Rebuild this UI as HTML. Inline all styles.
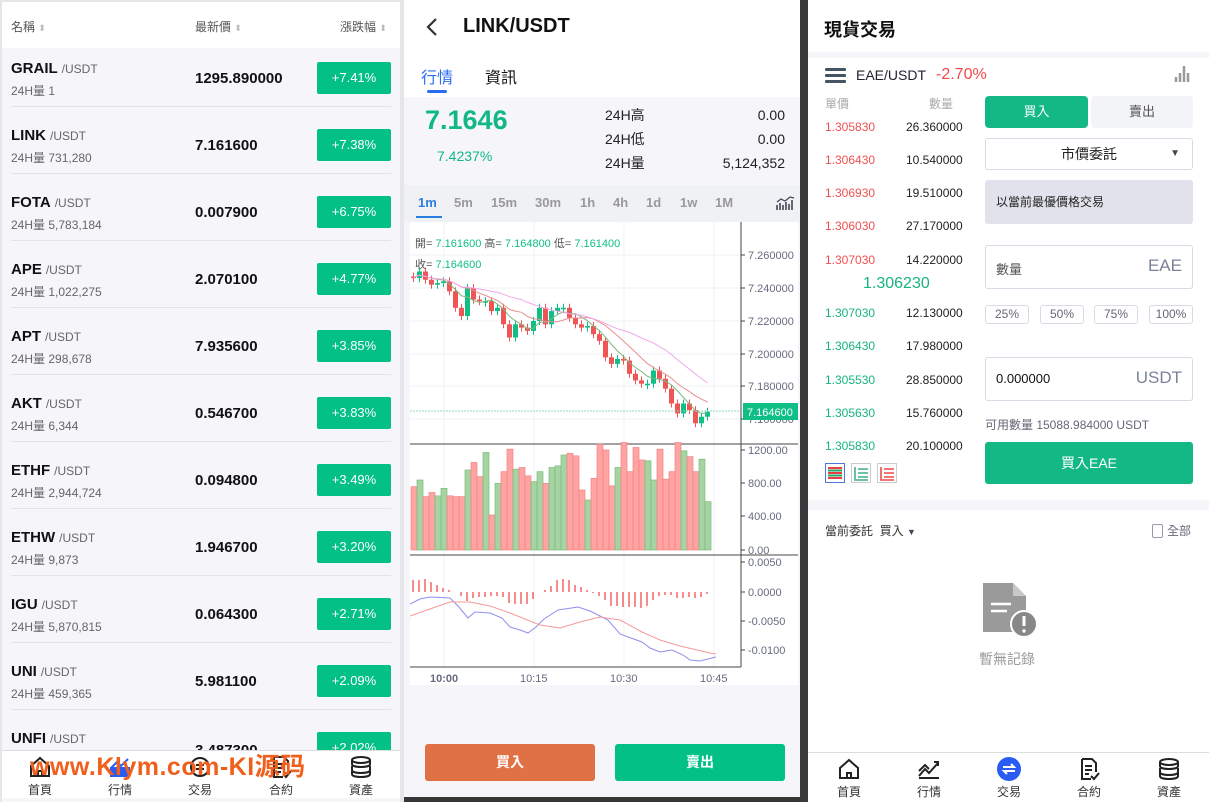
<!DOCTYPE html>
<html><head><meta charset="utf-8">
<style>
*{margin:0;padding:0;box-sizing:border-box}
body{width:1209px;height:802px;overflow:hidden;background:#e6e6ea;font-family:"Liberation Sans","Noto Sans CJK TC",sans-serif;position:relative;color:#111}
.a{position:absolute;white-space:nowrap}
#L{left:2px;top:2px;width:398px;height:800px;background:#f5f5fa;overflow:hidden}
#M{left:404px;top:0;width:396px;height:797px;background:#f5f5fa;overflow:hidden}
#R{left:808px;top:0;width:401px;height:802px;background:#fff;overflow:hidden}
.row{position:absolute;left:0;width:398px;height:67px}
.row .nm{position:absolute;left:9px;top:10px;font-size:15px;font-weight:bold;color:#111}
.row .nm span{font-weight:normal;font-size:12px;color:#666;margin-left:4px}
.row .vol{position:absolute;left:9px;top:32px;font-size:12px;color:#666}
.row .pr{position:absolute;left:193px;top:20px;font-size:15px;font-weight:bold}
.row .bt{position:absolute;left:315px;top:12px;width:74px;height:32px;background:#03c087;border-radius:2px;color:#fff;font-size:13px;text-align:center;line-height:32px}
.row .ln{position:absolute;left:9px;right:9px;bottom:10px;height:1px;background:#e2e2e8}
.nav{position:absolute;left:0;width:100%;height:48px;background:#fff}
.nav div{position:absolute;top:4px;width:60px;margin-left:-30px;text-align:center;font-size:12px;color:#333}
.nav svg{display:block;margin:0 auto 2px}
.ob{position:absolute;left:17px;font-size:12px}
.ob b{font-weight:normal;position:absolute;left:0}
.ob i{font-style:normal;position:absolute;left:81px;color:#222}
.box{position:absolute;border:1px solid #d8dbe6;border-radius:3px;background:#fff}
.pct{position:absolute;top:305px;width:44px;height:19px;border:1px solid #d8dbe6;border-radius:3px;font-size:12px;color:#667;text-align:center;line-height:17px}
</style></head><body>

<!-- LEFT -->
<div id="L" class="a">
  <div class="a" style="left:0;top:0;width:398px;height:46px;background:#fff"></div>
  <div class="a" style="left:9px;top:16px;font-size:12px;color:#555">名稱 <span style="color:#bbb;font-size:9px">⬍</span></div>
  <div class="a" style="left:193px;top:16px;font-size:12px;color:#555">最新價 <span style="color:#bbb;font-size:9px">⬍</span></div>
  <div class="a" style="left:338px;top:16px;font-size:12px;color:#555">漲跌幅 <span style="color:#bbb;font-size:9px">⬍</span></div>
  <div class="row" style="top:48px"><div class="nm">GRAIL<span>/USDT</span></div><div class="vol">24H量 1</div><div class="pr">1295.890000</div><div class="bt">+7.41%</div><div class="ln"></div></div>
  <div class="row" style="top:115px"><div class="nm">LINK<span>/USDT</span></div><div class="vol">24H量 731,280</div><div class="pr">7.161600</div><div class="bt">+7.38%</div><div class="ln"></div></div>
  <div class="row" style="top:182px"><div class="nm">FOTA<span>/USDT</span></div><div class="vol">24H量 5,783,184</div><div class="pr">0.007900</div><div class="bt">+6.75%</div><div class="ln"></div></div>
  <div class="row" style="top:249px"><div class="nm">APE<span>/USDT</span></div><div class="vol">24H量 1,022,275</div><div class="pr">2.070100</div><div class="bt">+4.77%</div><div class="ln"></div></div>
  <div class="row" style="top:316px"><div class="nm">APT<span>/USDT</span></div><div class="vol">24H量 298,678</div><div class="pr">7.935600</div><div class="bt">+3.85%</div><div class="ln"></div></div>
  <div class="row" style="top:383px"><div class="nm">AKT<span>/USDT</span></div><div class="vol">24H量 6,344</div><div class="pr">0.546700</div><div class="bt">+3.83%</div><div class="ln"></div></div>
  <div class="row" style="top:450px"><div class="nm">ETHF<span>/USDT</span></div><div class="vol">24H量 2,944,724</div><div class="pr">0.094800</div><div class="bt">+3.49%</div><div class="ln"></div></div>
  <div class="row" style="top:517px"><div class="nm">ETHW<span>/USDT</span></div><div class="vol">24H量 9,873</div><div class="pr">1.946700</div><div class="bt">+3.20%</div><div class="ln"></div></div>
  <div class="row" style="top:584px"><div class="nm">IGU<span>/USDT</span></div><div class="vol">24H量 5,870,815</div><div class="pr">0.064300</div><div class="bt">+2.71%</div><div class="ln"></div></div>
  <div class="row" style="top:651px"><div class="nm">UNI<span>/USDT</span></div><div class="vol">24H量 459,365</div><div class="pr">5.981100</div><div class="bt">+2.09%</div><div class="ln"></div></div>
  <div class="row" style="top:718px"><div class="nm">UNFI<span>/USDT</span></div><div class="pr" style="top:22px">3.487300</div><div class="bt">+2.02%</div></div>
  <div class="nav" style="top:748px;border-top:1px solid #ddd">
    <div style="left:38px"><svg width="24" height="24" viewBox="0 0 24 24" fill="none" stroke="#222" stroke-width="2"><path d="M3 11L12 3l9 8v10H3z M10 21v-5h4v5"/></svg>首頁</div>
    <div style="left:118px"><svg width="24" height="24" viewBox="0 0 24 24"><rect x="2" y="12" width="20" height="10" fill="#2a5cf5"/><path d="M3 13l6-6 4 4 7-7" stroke="#2a5cf5" stroke-width="2" fill="none"/></svg>行情</div>
    <div style="left:198px"><svg width="24" height="24" viewBox="0 0 24 24" fill="none" stroke="#222" stroke-width="2"><circle cx="12" cy="12" r="9"/><path d="M8 10h8M8 14h8"/></svg>交易</div>
    <div style="left:279px"><svg width="24" height="24" viewBox="0 0 24 24" fill="none" stroke="#222" stroke-width="2"><path d="M5 2h10l4 4v9M5 2v20h9M8 9h7M8 13h7M8 17h4M14 19l3 3 5-6"/></svg>合約</div>
    <div style="left:359px"><svg width="24" height="24" viewBox="0 0 24 24" fill="none" stroke="#222" stroke-width="2"><ellipse cx="12" cy="5" rx="9" ry="3"/><path d="M3 5v4c0 2 4 3 9 3s9-1 9-3V5M3 11v4c0 2 4 3 9 3s9-1 9-3v-4M3 16v3c0 2 4 3 9 3s9-1 9-3v-3"/></svg>資產</div>
  </div>
  <div class="a" style="left:28px;top:745px;font-size:25px;font-weight:bold;color:#f0601c;letter-spacing:0.5px">www.Klym.com-KI源码</div>
</div>

<!-- MIDDLE -->
<div id="M" class="a">
  <div class="a" style="left:0;top:0;width:396px;height:97px;background:#fff"></div>
  <svg class="a" style="left:20px;top:16px" width="16" height="22" viewBox="0 0 16 22"><path d="M12 3L4 11l8 8" stroke="#333" stroke-width="2.2" fill="none"/></svg>
  <div class="a" style="left:59px;top:15px;font-size:20px;font-weight:bold;color:#111">LINK/USDT</div>
  <div class="a" style="left:17px;top:64px;font-size:16px;color:#2a6df4">行情</div>
  <div class="a" style="left:81px;top:64px;font-size:16px;color:#111">資訊</div>
  <div class="a" style="left:23px;top:90px;width:20px;height:3px;background:#2a6df4;border-radius:2px"></div>
  <div class="a" style="left:21px;top:105px;font-size:27px;font-weight:bold;color:#11b886">7.1646</div>
  <div class="a" style="left:33px;top:148px;font-size:14px;color:#11b886">7.4237%</div>
  <div class="a" style="left:201px;top:103px;font-size:14px;color:#222;line-height:24px">24H高<br>24H低<br>24H量</div>
  <div class="a" style="right:15px;top:103px;font-size:14px;color:#222;line-height:24px;text-align:right">0.00<br>0.00<br>5,124,352</div>
  <div class="a" style="left:0;top:185px;width:396px;height:37px;background:#eff1f5"></div>
  <div class="a" style="left:14px;top:195px;font-size:13px;font-weight:bold;color:#2a7ee0">1m</div>
  <div class="a" style="left:12px;top:216px;width:26px;height:2px;background:#2a7ee0"></div>
  <div class="a" style="left:50px;top:195px;font-size:13px;font-weight:bold;color:#999">5m</div>
  <div class="a" style="left:87px;top:195px;font-size:13px;font-weight:bold;color:#999">15m</div>
  <div class="a" style="left:131px;top:195px;font-size:13px;font-weight:bold;color:#999">30m</div>
  <div class="a" style="left:176px;top:195px;font-size:13px;font-weight:bold;color:#999">1h</div>
  <div class="a" style="left:209px;top:195px;font-size:13px;font-weight:bold;color:#999">4h</div>
  <div class="a" style="left:242px;top:195px;font-size:13px;font-weight:bold;color:#999">1d</div>
  <div class="a" style="left:276px;top:195px;font-size:13px;font-weight:bold;color:#999">1w</div>
  <div class="a" style="left:311px;top:195px;font-size:13px;font-weight:bold;color:#999">1M</div>
  <svg class="a" style="left:372px;top:196px" width="19" height="15" viewBox="0 0 19 15"><path d="M1 14V9M4 14V7M7 14V9M10 14V6M13 14V8M16 14V4" stroke="#445" stroke-width="1.6"/><path d="M1 6l4-3 4 2 5-4 4 1" stroke="#445" stroke-width="1.2" fill="none"/></svg>
  <svg id="ch" class="a" style="left:6px;top:222px" width="388" height="463" viewBox="0 0 388 463"></svg>
  <div class="a" style="left:21px;top:744px;width:170px;height:37px;background:#e07145;border-radius:3px;color:#fff;font-size:14px;font-weight:bold;text-align:center;line-height:37px">買入</div>
  <div class="a" style="left:211px;top:744px;width:170px;height:37px;background:#03c087;border-radius:3px;color:#fff;font-size:14px;font-weight:bold;text-align:center;line-height:37px">賣出</div>
</div>
<div class="a" style="left:404px;top:797px;width:404px;height:5px;background:#363636"></div>
<div class="a" style="left:800px;top:0;width:8px;height:802px;background:#3a3a3a"></div>

<!-- RIGHT -->
<div id="R" class="a">
  <div class="a" style="left:16px;top:16px;font-size:18px;font-weight:bold;color:#111">現貨交易</div>
  <div class="a" style="left:0;top:52px;width:401px;height:6px;background:#f5f5fa"></div>
  <div class="a" style="left:17px;top:68px;width:21px;height:3px;background:#445566;box-shadow:0 6px 0 #445566,0 12px 0 #445566;border-radius:1px"></div>
  <div class="a" style="left:48px;top:67px;font-size:14px;color:#223">EAE/USDT</div>
  <div class="a" style="left:128px;top:66px;font-size:16px;color:#f04a4a">-2.70%</div>
  <svg class="a" style="left:366px;top:65px" width="17" height="17"><path d="M2 17v-5M6 17V8M10 17V1M14 17V8" stroke="#999" stroke-width="2.5"/></svg>
  <div class="a" style="left:17px;top:95px;font-size:12px;color:#aaa">單價</div>
  <div class="a" style="left:121px;top:95px;font-size:12px;color:#aaa">數量</div>
  <div class="ob" style="top:120px"><b style="color:#f05050">1.305830</b><i>26.360000</i></div>
  <div class="ob" style="top:153px"><b style="color:#f05050">1.306430</b><i>10.540000</i></div>
  <div class="ob" style="top:186px"><b style="color:#f05050">1.306930</b><i>19.510000</i></div>
  <div class="ob" style="top:219px"><b style="color:#f05050">1.306030</b><i>27.170000</i></div>
  <div class="ob" style="top:253px"><b style="color:#f05050">1.307030</b><i>14.220000</i></div>
  <div class="a" style="left:55px;top:275px;font-size:16px;color:#18b483">1.306230</div>
  <div class="ob" style="top:306px"><b style="color:#18b483">1.307030</b><i>12.130000</i></div>
  <div class="ob" style="top:339px"><b style="color:#18b483">1.306430</b><i>17.980000</i></div>
  <div class="ob" style="top:373px"><b style="color:#18b483">1.305530</b><i>28.850000</i></div>
  <div class="ob" style="top:406px"><b style="color:#18b483">1.305630</b><i>15.760000</i></div>
  <div class="ob" style="top:439px"><b style="color:#18b483">1.305830</b><i>20.100000</i></div>
  <svg class="a" style="left:17px;top:463px" width="74" height="22">
    <rect x="0.5" y="0.5" width="19" height="19" fill="#fff" stroke="#4a78d8"/><path d="M3 5h14M3 10h14M3 15h14" stroke="#e84040" stroke-width="2"/><path d="M3 7.5h14M3 12.5h14" stroke="#20a868" stroke-width="2"/>
    <rect x="26.5" y="0.5" width="19" height="19" fill="#fff" stroke="#ccc"/><path d="M30 4v13h13M33 6h10M33 10h10M33 14h10" stroke="#5bb898" stroke-width="1.8" fill="none"/>
    <rect x="52.5" y="0.5" width="19" height="19" fill="#fff" stroke="#ccc"/><path d="M56 4v13h13M59 6h10M59 10h10M59 14h10" stroke="#f06060" stroke-width="1.8" fill="none"/>
  </svg>
  <div class="a" style="left:177px;top:96px;width:103px;height:32px;background:#14b885;border-radius:4px;color:#fff;font-size:13px;text-align:center;line-height:32px">買入</div>
  <div class="a" style="left:283px;top:96px;width:102px;height:32px;background:#f3f4f8;border-radius:4px;color:#555;font-size:13px;text-align:center;line-height:32px">賣出</div>
  <div class="box" style="left:177px;top:138px;width:208px;height:32px;font-size:14px;text-align:center;line-height:30px;color:#222">市價委託<span style="position:absolute;right:12px;top:0;font-size:10px;color:#445">▼</span></div>
  <div class="a" style="left:177px;top:180px;width:208px;height:44px;background:#e1e2eb;border-radius:3px;font-size:12px;color:#222;line-height:44px;padding-left:11px">以當前最優價格交易</div>
  <div class="box" style="left:177px;top:245px;width:208px;height:44px"><span class="a" style="left:10px;top:13px;font-size:13px;color:#555">數量</span><span class="a" style="right:10px;top:10px;font-size:17px;color:#7a8399">EAE</span></div>
  <div class="pct" style="left:177px">25%</div>
  <div class="pct" style="left:232px">50%</div>
  <div class="pct" style="left:286px">75%</div>
  <div class="pct" style="left:341px">100%</div>
  <div class="box" style="left:177px;top:357px;width:208px;height:44px"><span class="a" style="left:10px;top:13px;font-size:13px;color:#111">0.000000</span><span class="a" style="right:10px;top:10px;font-size:17px;color:#7a8399">USDT</span></div>
  <div class="a" style="left:177px;top:416px;font-size:12px;color:#667">可用數量 15088.984000 USDT</div>
  <div class="a" style="left:177px;top:442px;width:208px;height:42px;background:#14b885;border-radius:3px;color:#fff;font-size:14px;text-align:center;line-height:42px">買入EAE</div>
  <div class="a" style="left:0;top:500px;width:401px;height:10px;background:#f5f5fa"></div>
  <div class="a" style="left:17px;top:522px;font-size:12px;color:#333">當前委託 &nbsp;買入 <span style="font-size:9px;color:#445">▼</span></div>
  <div class="a" style="left:344px;top:522px;font-size:12px;color:#667"><span style="display:inline-block;width:11px;height:14px;border:1px solid #99a;border-radius:2px;vertical-align:-3px;margin-right:4px"></span>全部</div>
  <svg class="a" style="left:174px;top:582px" width="56" height="56" viewBox="0 0 56 56"><path d="M1 1h30l13 13v36H1z" fill="#9a9a9a"/><path d="M31 1v13h13" fill="#c8c8c8"/><path d="M9 22h20M9 29h16" stroke="#fff" stroke-width="2.5"/><circle cx="42" cy="42" r="13" fill="#888" stroke="#fff" stroke-width="2"/><path d="M42 34v10" stroke="#fff" stroke-width="3"/><circle cx="42" cy="49" r="1.7" fill="#fff"/></svg>
  <div class="a" style="left:171px;top:649px;font-size:14px;color:#999">暫無記錄</div>
  <div class="nav" style="top:752px;height:50px;border-top:1px solid #ddd">
    <div style="left:41px"><svg width="24" height="24" viewBox="0 0 24 24" fill="none" stroke="#222" stroke-width="2"><path d="M3 11L12 3l9 8v10H3z M10 21v-5h4v5"/></svg>首頁</div>
    <div style="left:121px"><svg width="24" height="24" viewBox="0 0 24 24" fill="none" stroke="#222" stroke-width="2"><path d="M2 21h20M2 19l6-7 4 4 9-10M17 5h4v4M2 14l6-6 4 4"/></svg>行情</div>
    <div style="left:201px"><svg width="24" height="24" viewBox="0 0 24 24"><circle cx="12" cy="12" r="12" fill="#2a5cf5"/><path d="M6 10h11l-3-3M18 14H7l3 3" stroke="#fff" stroke-width="2" fill="none"/></svg>交易</div>
    <div style="left:281px"><svg width="24" height="24" viewBox="0 0 24 24" fill="none" stroke="#222" stroke-width="2"><path d="M5 2h10l4 4v9M5 2v20h9M8 9h7M8 13h7M8 17h4M14 19l3 3 5-6"/></svg>合約</div>
    <div style="left:361px"><svg width="24" height="24" viewBox="0 0 24 24" fill="none" stroke="#222" stroke-width="2"><ellipse cx="12" cy="5" rx="9" ry="3"/><path d="M3 5v4c0 2 4 3 9 3s9-1 9-3V5M3 11v4c0 2 4 3 9 3s9-1 9-3v-4M3 16v3c0 2 4 3 9 3s9-1 9-3v-3"/></svg>資產</div>
  </div>
</div>

<script>
(function(){
var s=document.getElementById('ch'),h='';
h+='<rect x="0" y="0" width="388" height="463" fill="#fff"/>';
[33,66,99,132,164,197].forEach(function(y){h+='<line x1="0" x2="331" y1="'+y+'" y2="'+y+'" stroke="#eef1f6"/>';});
[34,124,214,304].forEach(function(x){h+='<line x1="'+x+'" x2="'+x+'" y1="0" y2="445" stroke="#eef1f6"/>';});
var lab=function(y,t){h+='<line x1="331" x2="335" y1="'+y+'" y2="'+y+'" stroke="#444"/><text x="338" y="'+(y+4)+'" font-size="11" fill="#666a80" font-family="Liberation Sans">'+t+'</text>';};
lab(33,'7.260000');lab(66,'7.240000');lab(99,'7.220000');lab(132,'7.200000');lab(164,'7.180000');lab(197,'7.160000');
var py=function(p){return 33+(7.26-p)/0.02*33;};
var c=[7.247,7.246,7.250,7.245,7.242,7.243,7.244,7.238,7.228,7.223,7.240,7.233,7.232,7.232,7.226,7.228,7.218,7.210,7.218,7.216,7.214,7.220,7.228,7.218,7.226,7.228,7.228,7.222,7.218,7.216,7.217,7.212,7.208,7.198,7.194,7.197,7.196,7.188,7.184,7.182,7.182,7.190,7.185,7.179,7.170,7.164,7.170,7.166,7.158,7.162,7.165];
function sma(i,n){var t=0,k=0;for(var j=Math.max(0,i-n+1);j<=i;j++){t+=c[j];k++;}return t/k;}
var ma=[],ma2=[],ma3=[];
for(var i=1;i<c.length;i++){var o=c[i-1],cl=c[i],x=1+(i-1)*6,up=cl>=o,col=up?'#0fbf86':'#f05555';
var t=py(Math.max(o,cl)),b=py(Math.min(o,cl));if(b-t<1.5)b=t+1.5;
h+='<line x1="'+(x+2.5)+'" x2="'+(x+2.5)+'" y1="'+(t-4)+'" y2="'+(b+4)+'" stroke="'+col+'"/><rect x="'+x+'" y="'+t+'" width="5" height="'+(b-t)+'" fill="'+col+'"/>';
ma.push((x+2.5)+','+py(sma(i,5)).toFixed(1));ma2.push((x+2.5)+','+py(sma(i,10)).toFixed(1));ma3.push((x+2.5)+','+py(sma(i,20)).toFixed(1));}
h+='<polyline points="'+ma.join(' ')+'" fill="none" stroke="#7cb87c" stroke-width="1"/>';
h+='<polyline points="'+ma2.join(' ')+'" fill="none" stroke="#e89090" stroke-width="1"/>';
h+='<polyline points="'+ma3.join(' ')+'" fill="none" stroke="#f0a8e8" stroke-width="1"/>';
h+='<line x1="0" x2="331" y1="189" y2="189" stroke="#8fd8bc" stroke-dasharray="2,1"/>';
h+='<rect x="333" y="181" width="55" height="17" fill="#0fbf86"/><text x="337" y="194" font-size="11" fill="#fff" font-family="Liberation Sans">7.164600</text>';
h+='<text x="5" y="25" font-size="11" font-family="Liberation Sans,Noto Sans CJK TC" fill="#555">開= <tspan fill="#0fbf86">7.161600</tspan>  高= <tspan fill="#0fbf86">7.164800</tspan>  低= <tspan fill="#0fbf86">7.161400</tspan></text>';
h+='<text x="5" y="46" font-size="11" font-family="Liberation Sans,Noto Sans CJK TC" fill="#555">收= <tspan fill="#0fbf86">7.164600</tspan></text>';
h+='<line x1="0" x2="388" y1="222" y2="222" stroke="#444"/><line x1="0" x2="388" y1="333" y2="333" stroke="#444"/><line x1="331" x2="331" y1="0" y2="445" stroke="#444"/><line x1="0" x2="331" y1="445" y2="445" stroke="#444"/>';
var v=[760,840,640,690,650,740,650,640,640,960,1050,880,1170,420,800,940,1210,970,990,890,820,940,800,990,1010,1140,1160,1130,720,600,860,1270,1200,770,990,1330,940,1230,1080,1070,840,1210,850,940,1300,1190,1120,940,1090,580];
for(var j=0;j<v.length;j++){var up=(c[j+1]>=c[j]);var hh=Math.min(v[j],1290)/1200*100;
h+='<rect x="'+(1+j*6)+'" y="'+(328-hh)+'" width="6" height="'+hh+'" fill="'+(up?'#a6d3a2':'#ffa3a3')+'" stroke="'+(up?'#7cbd7c':'#f08484')+'" stroke-width="0.7"/>';}
lab(228,'1200.00');lab(261,'800.00');lab(294,'400.00');lab(328,'0.00');
lab(340,'0.0050');lab(370,'0.0000');lab(399,'-0.0050');lab(428,'-0.0100');
var m=[12,12,13,10,7,4,2,0,-4,-9,-6,-5,-5,-4,-4,-5,-11,-12,-12,-12,-7,0,2,6,12,13,12,7,5,2,-1,-4,-8,-14,-14,-15,-15,-15,-16,-14,-8,-4,-3,-3,-6,-6,-5,-6,-5,-2];
for(var k=0;k<m.length;k++){var x=3+k*6;h+='<line x1="'+x+'" x2="'+x+'" y1="370" y2="'+(370-m[k])+'" stroke="#f04040" stroke-width="1.2"/>';}
h+='<polyline points="0,382 10,377 20,375 40,376 48,384 58,396 65,390 80,391 92,396 100,405 110,408 118,411 126,405 134,397 148,388 168,385 180,389 198,398 210,412 232,420 240,426 250,430 262,428 273,433 280,438 290,439 306,435" fill="none" stroke="#8f8ff0" stroke-width="1"/>';
h+='<polyline points="0,394 20,387 40,380 60,380 80,384 100,391 130,403 150,406 170,400 190,395 210,398 232,410 250,418 270,424 300,431 306,432" fill="none" stroke="#f59a9a" stroke-width="1"/>';
h+='<text x="20" y="460" font-size="11" font-weight="bold" fill="#666a80" font-family="Liberation Sans">10:00</text>';
h+='<text x="110" y="460" font-size="11" fill="#666a80" font-family="Liberation Sans">10:15</text>';
h+='<text x="200" y="460" font-size="11" fill="#666a80" font-family="Liberation Sans">10:30</text>';
h+='<text x="290" y="460" font-size="11" fill="#666a80" font-family="Liberation Sans">10:45</text>';
s.innerHTML=h;})();
</script>
</body></html>
